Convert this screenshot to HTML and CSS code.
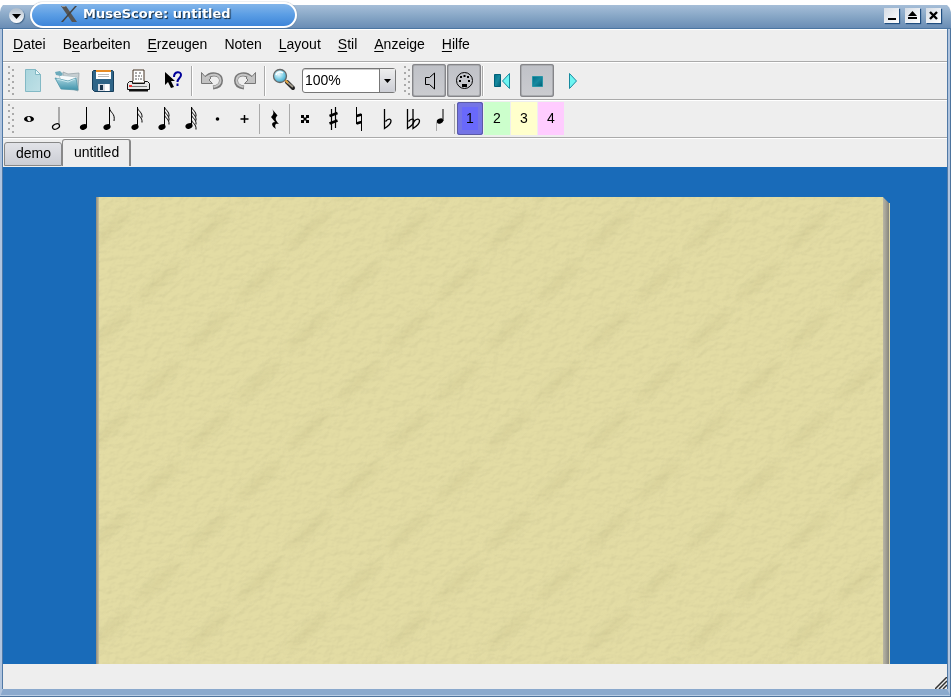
FILE: index.html
```html
<!DOCTYPE html>
<html lang="de">
<head>
<meta charset="utf-8">
<title>MuseScore: untitled</title>
<link rel="stylesheet" href="styles.css">
</head>
<body>
<svg class="defs" aria-hidden="true">
  <defs>
    <linearGradient id="teal" x1="0" y1="0" x2="1" y2="1"><stop offset="0" stop-color="#006f88"/><stop offset=".5" stop-color="#16899f"/><stop offset="1" stop-color="#005f75"/></linearGradient>
    <linearGradient id="paper" x1="0" y1="0" x2="1" y2="1"><stop offset="0" stop-color="#a9d5dd"/><stop offset="1" stop-color="#bfe0e6"/></linearGradient>
    <linearGradient id="folder" x1="0" y1="0" x2="0" y2="1"><stop offset="0" stop-color="#a8d4df"/><stop offset="1" stop-color="#3f93ab"/></linearGradient>
    <radialGradient id="lens" cx=".4" cy=".35" r=".7"><stop offset="0" stop-color="#effcff"/><stop offset=".6" stop-color="#76cbe4"/><stop offset="1" stop-color="#3ba0c4"/></radialGradient>
    <g id="head"><ellipse rx="3.7" ry="2.700" transform="rotate(-25)"/></g>
    <path id="flag" d="M0 0c.5 3 5 4 4.500 9.500" fill="none" stroke="#000" stroke-width="1"/>
    <path id="flat" d="M0 0V19.500C4 17 6.500 14.500 6.500 12S3.500 9.500 1 12.500" fill="none" stroke="#000" stroke-width="1.300"/>
    <g id="arc" fill="none">
      <path d="M12 14c5-6 15-4 15 2.500 0 4-3 6.500-8 7" stroke="#777" stroke-width="4"/>
      <path d="M7.500 8.500v11h11l-3.500-3.500 2-2-3-3-3 1.500z" fill="#c2c2c2" stroke="#777"/>
      <path d="M12 14.500c5-6 14-4.500 14.500 2 0 3.500-2.500 5.500-7 6.500" stroke="#c6c6c6" stroke-width="2"/>
    </g>
  </defs>
</svg>
<div class="window">
  <header class="titlebar">
    <button class="round" aria-label="Fenstermenü"><svg viewBox="0 0 15 15"><path d="M3 6h9l-4.500 5z"/></svg></button>
    <div class="caption">
      <svg class="xlogo" viewBox="0 0 16 16"><path d="M0 0h5l11 16h-5z" fill="#555"/><path d="M14 0h2L2 16H0z" fill="#444"/><path d="M1 .5h3.500" stroke="#999"/></svg>
      <h1>MuseScore: untitled</h1>
    </div>
    <div class="winbuttons">
      <button aria-label="Minimieren"><svg viewBox="0 0 15 15"><path d="M4 10h8v2H4z"/></svg></button>
      <button aria-label="Maximieren"><svg viewBox="0 0 15 15"><path d="M7.500 3l4.500 5H3zM3 9h9v2H3z"/></svg></button>
      <button aria-label="Schließen"><svg viewBox="0 0 15 15"><path d="M4 4l7 7M11 4l-7 7" stroke="#000" stroke-width="2.400"/></svg></button>
    </div>
  </header>
  <div class="body">
    <nav class="menubar">
      <a href="#"><u>D</u>atei</a><a href="#">B<u>e</u>arbeiten</a><a href="#"><u>E</u>rzeugen</a><a href="#">Noten</a><a href="#"><u>L</u>ayout</a><a href="#"><u>S</u>til</a><a href="#"><u>A</u>nzeige</a><a href="#"><u>H</u>ilfe</a>
    </nav>
    <div class="toolbar main">
      <i class="grip"></i>
      <button aria-label="Neu"><svg viewBox="0 0 34 33"><path d="M9.500 5.500h10l5 5v17h-15z" fill="url(#paper)" stroke="#83b9c5"/><path d="M19.500 5.500v5h5z" fill="#e9f8fa" stroke="#83b9c5"/></svg></button>
      <button aria-label="Öffnen"><svg viewBox="0 0 34 33"><path d="M12 8l5 2 11-1-1 18-14-5z" fill="#c7cfd2" stroke="#98a5a9" stroke-width=".8"/><path d="M8 11l18 2v7H11z" fill="#f7fbfc" stroke="#9fb4ba" stroke-width=".6"/><path d="M4 8l5-1 3 3-2 2-5-1z" fill="#6caabb"/><path d="M4 14l13 3 8-3 2 12-17-1z" fill="url(#folder)" stroke="#4c94a8" stroke-width=".8"/><path d="M6 15l11 3 7-3" fill="none" stroke="#c7e7ee"/></svg></button>
      <button aria-label="Speichern"><svg viewBox="0 0 34 33"><path d="M6.500 7.500l1-1h19l1 1v20h-19l-2-2z" fill="#2f6487" stroke="#163e5b"/><path d="M10 7h15v8H10z" fill="#fff"/><path d="M10 6h15v2H10z" fill="#e78b23"/><path d="M12 10.500h11M12 12.500h11" stroke="#bbb"/><path d="M12 20h12v7H12z" fill="#d5dae3"/><path d="M14 21h3v5h-3z" fill="#19334a"/><path d="M19 20h4v7h-4z" fill="#fff"/></svg></button>
      <button aria-label="Drucken"><svg viewBox="0 0 34 33"><path d="M10 19l2-2V6h11v11l3 2z" fill="#fff" stroke="#432" stroke-width="1"/><path d="M14 9h3m1 0h3m-7 3h2m1 0h4m-7 3h4m1 0h2" stroke="#555" stroke-dasharray="2 1"/><path d="M6.500 19.500l2-2h3v2h12v-2h3l2 2v6h-22z" fill="#e6e6e6" stroke="#111"/><path d="M9 22.500h17" stroke="#777"/><path d="M8 21h3v2H8z" fill="#e33"/><path d="M8 26.500h19" stroke="#111" stroke-width="2"/></svg></button>
      <button aria-label="Direkthilfe"><svg viewBox="0 0 34 33"><path d="M9 8v13l3-3 3 6 3-1-3-6h4z"/><path d="M18 13c0-6 7-6 7-2 0 3-3.500 3-3.500 7M21.500 19.500v2.500" fill="none" stroke="#00009a" stroke-width="2"/></svg></button>
      <i class="sep"></i>
      <button aria-label="Rückgängig"><svg viewBox="0 0 34 33"><use href="#arc"/></svg></button>
      <button aria-label="Wiederherstellen"><svg viewBox="0 0 34 33"><use href="#arc" transform="translate(34 0) scale(-1 1)"/></svg></button>
      <i class="sep"></i>
      <button aria-label="Vergrößerung"><svg viewBox="0 0 34 33"><path d="M20 18l6 6" stroke="#222" stroke-width="4" stroke-linecap="round"/><path d="M20 18l6 5" stroke="#a09a8c" stroke-width="2"/><path d="M18 16l3 3" stroke="#e4a540" stroke-width="2"/><circle cx="13" cy="12" r="6.500" fill="url(#lens)" stroke="#666" stroke-width="1.300"/><path d="M9 11c1-3 4-4 7-2" fill="none" stroke="#fff" stroke-width="1.500"/></svg></button>
      <div class="zoom"><select aria-label="Zoom"><option>100%</option><option>200%</option></select><span class="arrow"><svg viewBox="0 0 15 23"><path d="M4 10h7l-3.500 4z"/></svg></span></div>
      <i class="grip"></i>
      <button class="on" aria-label="Ton"><svg viewBox="0 0 34 33"><path d="M13.500 13.500h4l5-4.500v16l-5-4.500h-4z" fill="none" stroke="#000"/></svg></button>
      <button class="on" aria-label="MIDI"><svg viewBox="0 0 34 33"><circle cx="17.500" cy="16.500" r="8" fill="none" stroke="#000"/><path d="M12 16h2v2h-2zM21 16h2v2h-2zM13 12h2v2h-2zM20 12h2v2h-2zM16.500 11h2v2h-2zM15 20h5v3h-5z"/></svg></button>
      <i class="sep"></i>
      <button aria-label="Zum Anfang"><svg viewBox="0 0 34 33"><path d="M9.500 10.500h6v12h-6z" fill="url(#teal)" stroke="#006078"/><path d="M24.500 9.500v15l-7-7.500z" fill="#6df5f2" stroke="#168a9f"/></svg></button>
      <button class="on" aria-label="Stopp"><svg viewBox="0 0 34 33"><path d="M12.500 12.500h10v10h-10z" fill="url(#teal)" stroke="#2995a6"/></svg></button>
      <button aria-label="Wiedergabe"><svg viewBox="0 0 34 33"><path d="M14.500 9.500v15l7-7.500z" fill="#6df5f2" stroke="#168a9f"/></svg></button>
    </div>
    <div class="toolbar notes">
      <i class="grip"></i>
      <button aria-label="Ganze Note"><svg viewBox="0 0 26 32"><ellipse cx="13" cy="16" rx="5" ry="3"/><ellipse cx="13" cy="16" rx="1.800" ry="2.300" fill="#eee" transform="rotate(-20 13 16)"/></svg></button>
      <button aria-label="Halbe Note"><svg viewBox="0 0 26 32"><path d="M16 4v19" stroke="#aaa" stroke-width="2"/><ellipse cx="13" cy="23.500" rx="3.700" ry="2.400" fill="#eee" stroke="#000" stroke-width="1.200" transform="rotate(-25 13 23.500)"/></svg></button>
      <button aria-label="Viertelnote"><svg viewBox="0 0 26 32"><use href="#head" x="13.500" y="24"/><path d="M16.500 4v19" stroke="#000"/></svg></button>
      <button aria-label="Achtelnote"><svg viewBox="0 0 26 32"><use href="#head" x="10" y="24"/><path d="M12.500 4v19M12.500 5c.5 5 6 5 4.500 13" stroke="#000" fill="none"/></svg></button>
      <button aria-label="Sechzehntelnote"><svg viewBox="0 0 26 32"><use href="#head" x="11" y="24"/><path d="M13.500 4v19" stroke="#000"/><use href="#flag" x="13.500" y="5"/><use href="#flag" x="13.500" y="10"/></svg></button>
      <button aria-label="Zweiunddreißigstelnote"><svg viewBox="0 0 26 32"><use href="#head" x="11" y="24"/><path d="M13.500 4v19" stroke="#000"/><use href="#flag" x="13.500" y="4"/><use href="#flag" x="13.500" y="8"/><use href="#flag" x="13.500" y="12"/></svg></button>
      <button aria-label="Vierundsechzigstelnote"><svg viewBox="0 0 26 32"><use href="#head" x="11" y="23"/><path d="M13.500 4v18" stroke="#000"/><use href="#flag" x="13.500" y="4"/><use href="#flag" x="13.500" y="8"/><use href="#flag" x="13.500" y="12"/><use href="#flag" x="13.500" y="17"/></svg></button>
      <button aria-label="Punktierung"><svg viewBox="0 0 26 32"><circle cx="12.500" cy="16" r="1.800"/></svg></button>
      <button aria-label="Haltebogen"><svg viewBox="0 0 26 32"><path d="M12.500 12v8M8.500 16h8" stroke="#000" stroke-width="1.500"/></svg></button>
      <i class="sep"></i>
      <button aria-label="Pause"><svg viewBox="0 0 26 32"><path d="M10 6l5.500 6.500c-3 3-2 5 1.500 8.500-3-1-5 0-3 5-5-3-5-7-1-7l-4-5c3-3 3-5 1-8z"/></svg></button>
      <i class="sep"></i>
      <button aria-label="Doppelkreuz"><svg viewBox="0 0 26 32"><path d="M10 13l6 6M16 13l-6 6" stroke="#000" stroke-width="1.500"/><path d="M9 12h3v3H9zM14 12h3v3h-3zM9 17h3v3H9zM14 17h3v3h-3z"/></svg></button>
      <button aria-label="Kreuz"><svg viewBox="0 0 26 32"><path d="M12.500 6v21M16.500 4v21" stroke="#000" stroke-width="1.200"/><path d="M10.500 13l8-3M10.500 20.500l8-3" stroke="#000" stroke-width="2.600"/></svg></button>
      <button aria-label="Auflöser"><svg viewBox="0 0 26 32"><path d="M10.500 4v17M15.500 11v17" stroke="#000"/><path d="M10.500 13l5-1.500M10.500 20.500l5-1.500" stroke="#000" stroke-width="2.400"/></svg></button>
      <button aria-label="Be"><svg viewBox="0 0 26 32"><use href="#flat" x="11.500" y="6"/></svg></button>
      <button aria-label="Doppel-Be"><svg viewBox="0 0 26 32"><use href="#flat" x="7.500" y="6"/><use href="#flat" x="13" y="6"/></svg></button>
      <button aria-label="Vorschlag"><svg viewBox="0 0 26 32"><ellipse cx="13" cy="18" rx="3.300" ry="2.500" transform="rotate(-25 13 18)"/><path d="M16 6v12" stroke="#000"/><path d="M9.500 19v9" stroke="#aaa"/></svg></button>
      <i class="sep"></i>
      <button class="voice v1">1</button><button class="voice v2">2</button><button class="voice v3">3</button><button class="voice v4">4</button>
    </div>
    <div class="tabs" role="tablist">
      <button class="tab" role="tab">demo</button><button class="tab active" role="tab" aria-selected="true">untitled</button>
    </div>
    <main class="canvas">
      <div class="page">
        <svg class="texture" aria-hidden="true">
          <defs>
            <filter id="soft" x="-50%" y="-80%" width="200%" height="260%"><feGaussianBlur stdDeviation="4"/></filter>
            <filter id="grain" x="0" y="0" width="100%" height="100%" color-interpolation-filters="sRGB">
              <feTurbulence type="fractalNoise" baseFrequency=".12 .16" numOctaves="3" seed="4"/>
              <feDiffuseLighting surfaceScale="0.7" diffuseConstant="1.100" lighting-color="#fff"><feDistantLight azimuth="235" elevation="62"/></feDiffuseLighting>
            </filter>
            <pattern id="streaks" width="100" height="100" patternUnits="userSpaceOnUse">
              <g fill="#cdc690" opacity=".55" filter="url(#soft)">
                <ellipse cx="63" cy="84" rx="30" ry="4" transform="rotate(-42 63 84)"/>
                <ellipse cx="63" cy="-16" rx="30" ry="4" transform="rotate(-42 63 -16)"/>
                <ellipse cx="13" cy="33" rx="30" ry="4" transform="rotate(-42 13 33)"/>
                <ellipse cx="113" cy="33" rx="30" ry="4" transform="rotate(-42 113 33)"/>
              </g>
            </pattern>
          </defs>
          <rect width="100%" height="100%" fill="#e3dca4"/>
          <rect width="100%" height="100%" fill="url(#streaks)"/>
          <rect class="grain" width="100%" height="100%" filter="url(#grain)"/>
        </svg>
        <i class="edge"></i>
      </div>
    </main>
    <footer class="status"><svg viewBox="0 0 12 12"><path d="M0 12L12 0M4 12l8-8M8 12l4-4" stroke="#333" stroke-width="1.500"/></svg></footer>
  </div>
</div>
</body>
</html>
```
FILE: styles.css
```css
* { box-sizing: border-box; }
body { margin: 0; background: #fff; color: #000; font: 14px/18px "Liberation Sans", Arial, sans-serif; }
button { border: 0; padding: 0; background: none; font: inherit; color: inherit; flex: none; }
svg { display: block; }
.defs { position: absolute; width: 0; height: 0; }

.window { height: 100vh; display: flex; flex-direction: column; padding-top: 2px; }
.titlebar {
  height: 27px; flex: none; display: flex; align-items: flex-start; padding: 0 10px 0 9px;
  background: linear-gradient(#a6bed8, #85a5c5 50%, #6a8db5 96%, #4b76a2 96%) 0 3px / 100% 24px no-repeat;
  border-radius: 10px 12px 0 0;
}
.round { width: 15px; height: 15px; margin-top: 6px; border-radius: 50%; background: linear-gradient(#aebccb, #fff); box-shadow: 1px 1px 1px #486a8d; }
.caption {
  width: 267px; height: 26px; margin-left: 6px; padding: 0 0 3px 29px; display: flex; align-items: center; gap: 6px;
  border: 2px solid #fff; border-radius: 13px; background: linear-gradient(#82b5ea, #5a9de4 50%, #3d85d9); box-shadow: 0 0 1px #567;
}
.xlogo { width: 16px; height: 16px; }
h1 { margin: 0; font: bold 13px/18px "DejaVu Sans", sans-serif; color: #fff; text-shadow: 1px 1px 1px #123; }
.winbuttons { margin: 6px 0 0 auto; display: flex; gap: 6px; }
.winbuttons button { width: 15px; height: 15px; background: linear-gradient(135deg, #d5dce5, #fff); box-shadow: 1px 1px 1px #204e80; }

.body {
  flex: 1; min-height: 0; display: flex; flex-direction: column; background: #eee; position: relative;
  border-style: solid; border-width: 0 4px 8px 3px; border-color: #b0c4de;
  border-bottom-color: #8aa9cd; box-shadow: inset 0 1px #fff;
}
.body::before { content: ""; position: absolute; inset: 0 -1px 0 -1px; border: solid #5079a6; border-width: 0 1px; pointer-events: none; }
.body::after { content: ""; position: absolute; inset: 0 -4px -8px -3px; border: solid #4d749e; border-width: 0 1px 1px 0; box-shadow: inset 0 -1px #b9cde4; pointer-events: none; }
.menubar { height: 32px; flex: none; display: flex; align-items: center; gap: 17px; padding: 0 10px 2px; }
.menubar a { color: inherit; text-decoration: none; }
.menubar u { text-underline-offset: 2px; text-decoration-thickness: 1px; }

.toolbar { height: 38px; flex: none; display: flex; align-items: center; gap: 1px; padding-left: 5px; border-top: 1px solid #aaa; box-shadow: inset 0 1px #fff; }
.grip { width: 7px; height: 30px; flex: none; background: radial-gradient(circle at 1px 1px, #aaa 1px, transparent 1px) 0 0 / 7px 6px, radial-gradient(circle at 5px 4px, #aaa 1px, transparent 1px) 0 0 / 7px 6px; }
.sep { width: 2px; height: 30px; flex: none; border-left: 1px solid #aaa; border-right: 1px solid #fff; }
.main button { width: 34px; height: 33px; }
.main button svg { width: 34px; height: 33px; }
.main .on { border-radius: 3px; background: linear-gradient(#bfc1c7, #cbccd0); box-shadow: inset 0 0 0 1px #858589, inset 0 0 0 2px #aaacb0; }
.zoom { width: 94px; height: 25px; display: flex; position: relative; border: 1px solid #777; border-radius: 3px; background: #fff; box-shadow: inset 0 1px #ccc; margin-right: 7px; }
.zoom select { width: 100%; appearance: none; border: 0; padding: 0 2px 2px; background: none; font: inherit; color: inherit; }
.arrow { position: absolute; inset: 0 0 0 auto; width: 16px; border-left: 1px solid #777; background: linear-gradient(#eee, #ccced5); pointer-events: none; }
.notes button { width: 26px; height: 33px; }
.notes .sep { margin: 0 1px 0 0; width: 1px; border-right: 0; }
.voice { padding-bottom: 2px; }
.v1 { border-radius: 3px; background: #6969fb; box-shadow: inset 0 0 0 1px #5b5ba5, inset 0 0 0 5px #7575e5; }
.v2 { background: #cfc; }
.v3 { background: #ffc; }
.v4 { background: #fcf; }

.tabs { height: 30px; flex: none; display: flex; align-items: flex-end; padding: 0 1px 1px; border-top: 1px solid #aaa; box-shadow: inset 0 1px #fff; }
.tab { height: 24px; padding: 0 10px 2px 11px; border: 1px solid #888; border-radius: 3px 3px 0 0; background: linear-gradient(#e2e3e8, #cbcdd4); }
.tab.active { height: 27px; border-bottom: 0; background: #eee; border-right-width: 2px; }

.canvas { flex: 1; min-height: 0; display: flex; padding: 30px 57px 0 93px; background: #196bb9; overflow: hidden; }
.page { flex: 1; display: flex; position: relative; }
.page::before { content: ""; position: absolute; inset: 0 auto 0 0; width: 3px; background: linear-gradient(90deg, #8e8a7c, #c9c3a0); }
.texture { flex: 1; min-width: 0; height: 100%; }
.grain { mix-blend-mode: multiply; opacity: .25; }
.edge { width: 7px; background: linear-gradient(90deg, #b9b6a4, #a3a196 40%, #85847b 85%, #ddd6a8 86%); clip-path: polygon(0 0, 6px 6px, 7px 6px, 7px 100%, 0 100%); }
.status { height: 25px; flex: none; display: flex; align-items: flex-end; justify-content: flex-end; }
.status svg { width: 12px; height: 12px; }
```
